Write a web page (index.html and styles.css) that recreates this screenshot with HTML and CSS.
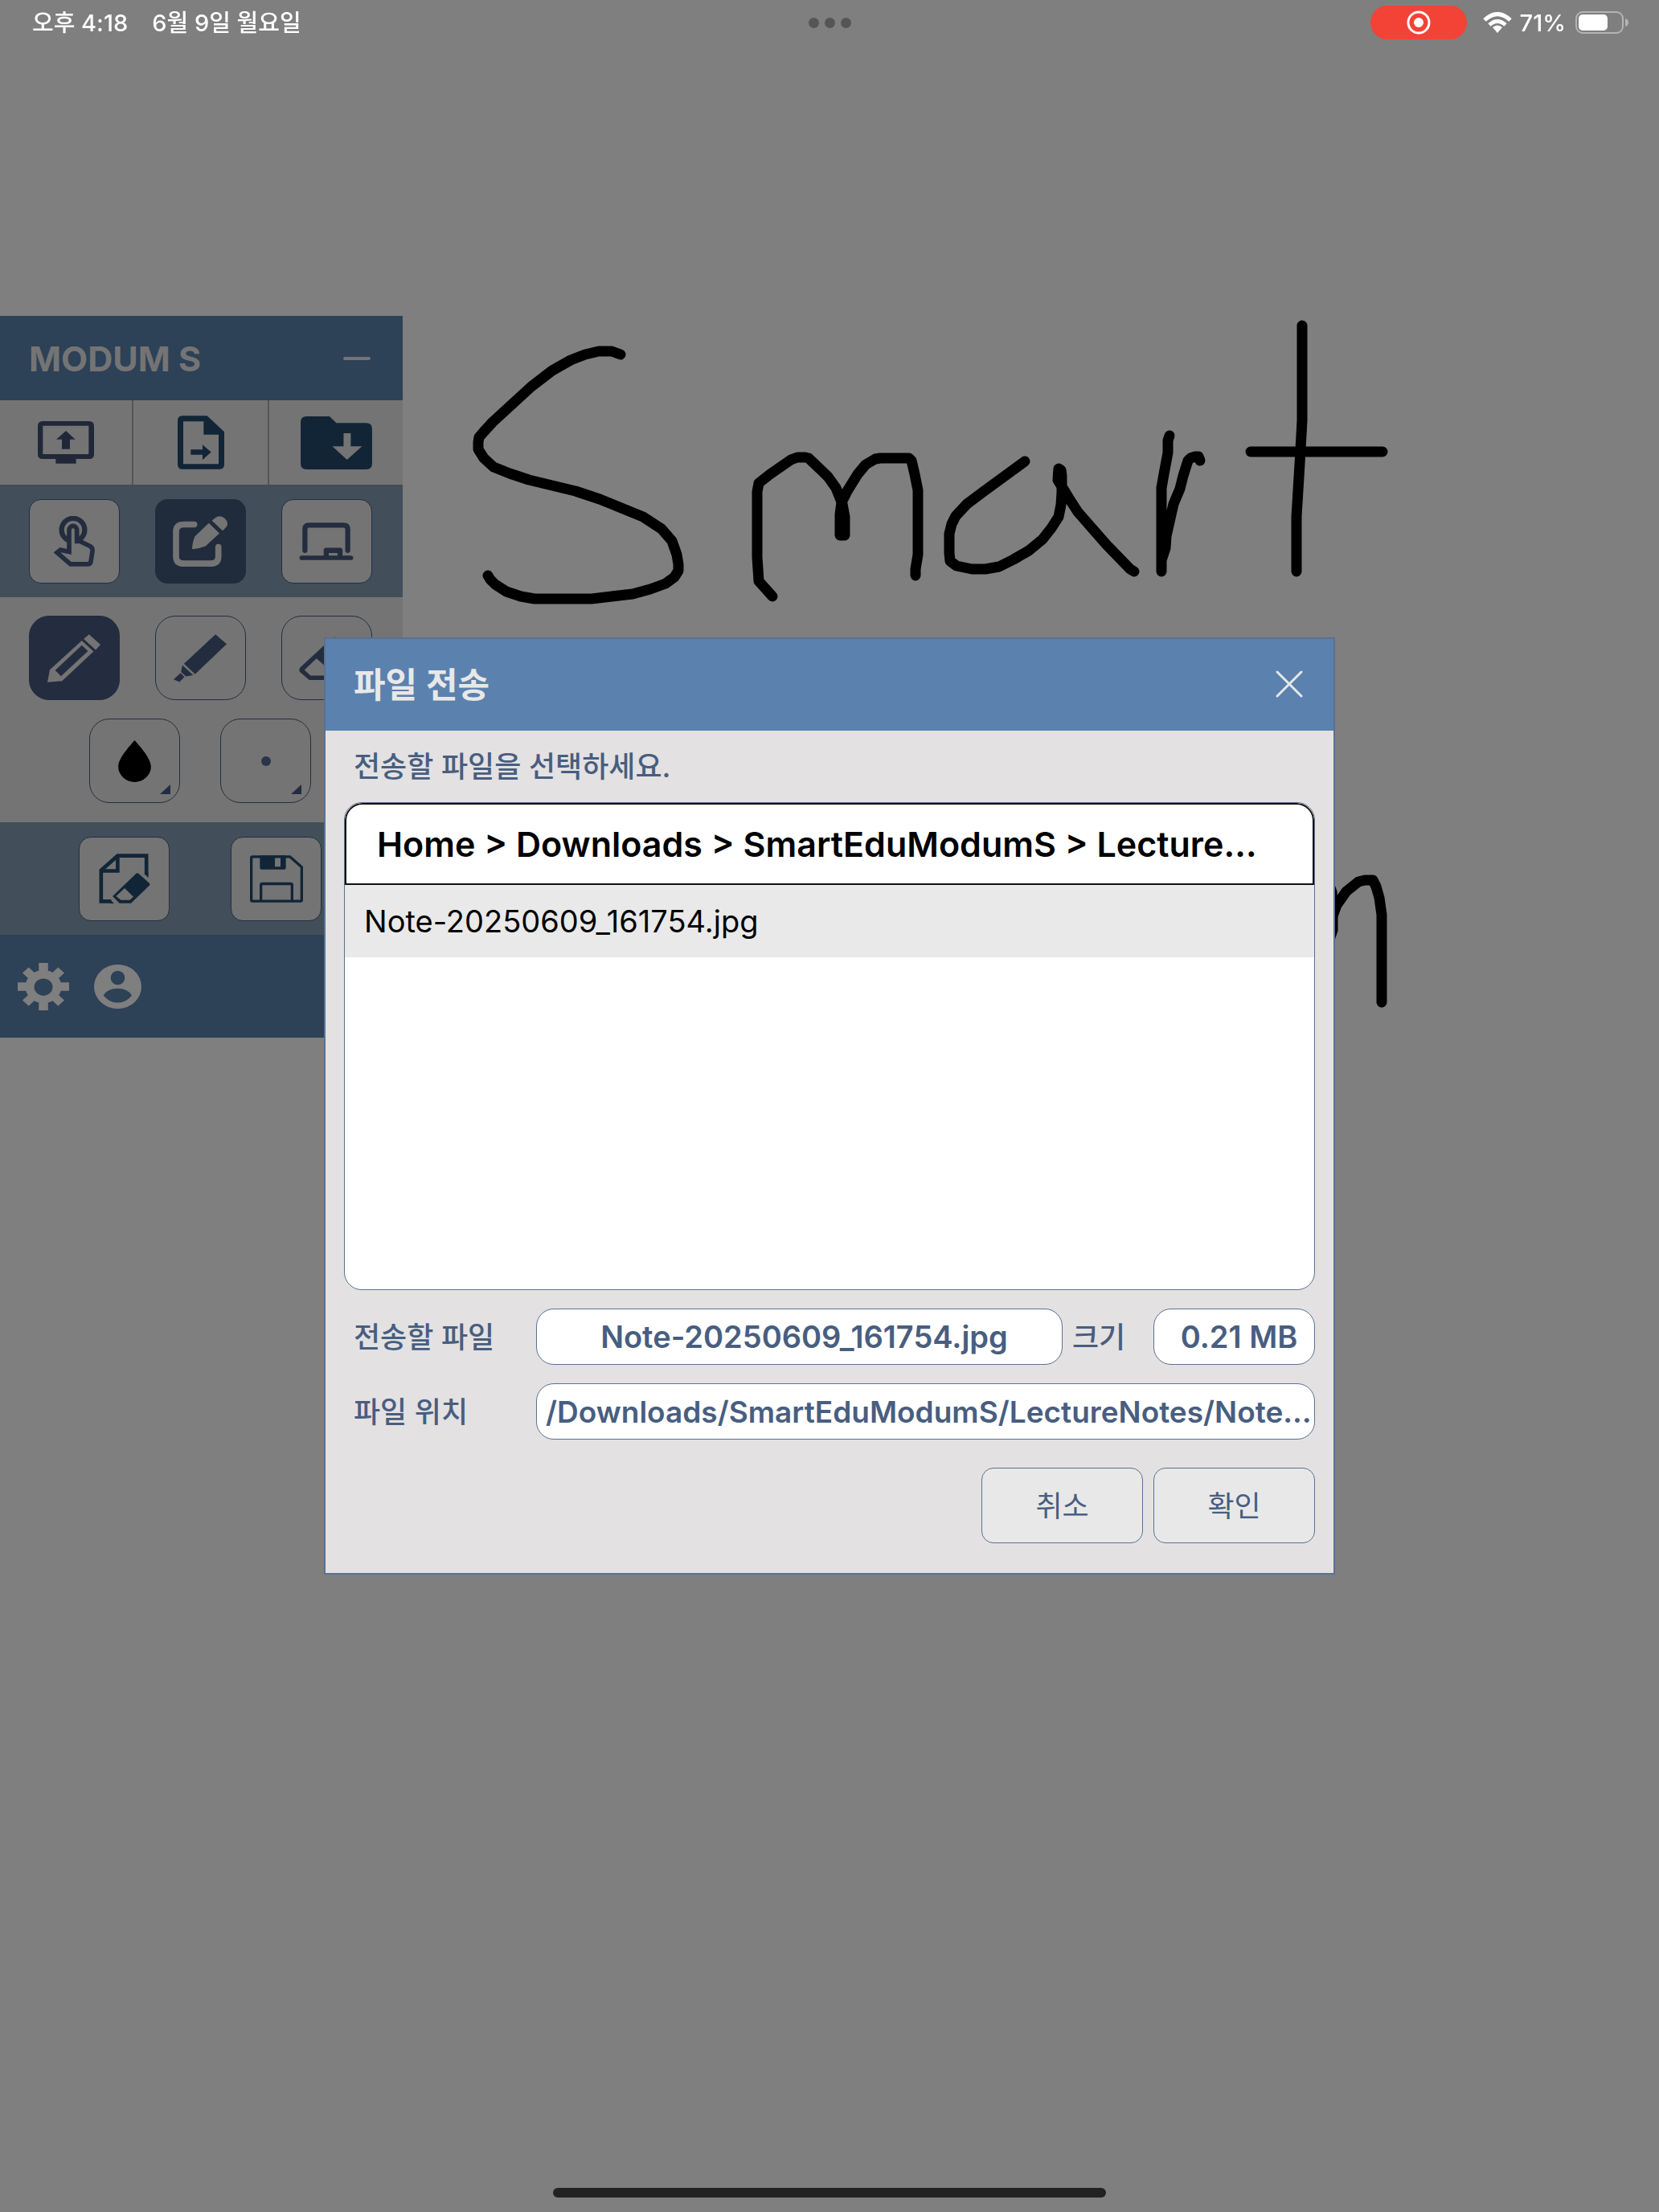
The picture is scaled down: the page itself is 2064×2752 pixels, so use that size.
FILE: index.html
```html
<!DOCTYPE html>
<html lang="ko">
<head>
    <meta charset="UTF-8">
    <meta name="viewport" content="width=device-width, initial-scale=1.0">
    <title>MODUM S</title>
    <link rel="stylesheet" href="styles.css">
</head>
<body>
    <!-- Pen strokes on the board -->
    <svg class="board" width="2064" height="2752" viewBox="0 0 2064 2752" aria-hidden="true">
        <polyline points="772,441 761,437 745,437 728,441 710,448 687,461 661,481 613,525 602,537 596,544 595,550 595,559 602,570 614,581 634,589 658,597 716,611 746,621 800,643 823,658 836,673 842,690 844,702 844,710 839,718 828,726 809,733 787,739 761,742 736,745 665,745 648,742 630,736 616,727 610,721 607,716"/>
        <polyline points="961,742 944,723 942,693 942,612 944,601 958,590 984,572 992,569 1002,569 1006,570 1030,593 1040,607 1048,627 1051,643 1051,666 1045,666 1045,640 1047,625 1054,611 1067,590 1077,578 1089,571 1095,570 1131,570 1134,573 1138,590 1142,610 1142,690 1139,708 1139,716"/>
        <polyline points="1275,574 1223,612 1203,627 1189,642 1184,652 1181,664 1181,688 1182,698 1190,704 1209,708 1226,708 1243,705 1261,696 1280,685 1297,671 1308,657 1317,643 1320,628 1321,613 1321,592 1320,585 1317,583 1316,597 1330,620 1341,637 1376,677 1406,708 1411,711"/>
        <polyline points="1455,542 1453,548 1453,563 1448,590 1445,607 1445,711 1445,697 1450,682 1451,667 1460,627 1468,608 1472,592 1478,573 1481,570 1487,568 1491,568 1493,573"/>
        <polyline points="1620,405 1620,523 1617,577 1613,643 1613,711"/>
        <polyline points="1556,562 1720,562"/>
        <polyline points="1652,1096 1657,1110 1658,1130 1658,1157 1652,1175"/>
        <polyline points="1652,1156 1663,1126 1675,1109 1690,1097 1698,1095 1708,1095 1712,1103 1716,1117 1719,1138 1719,1247"/>
    </svg>

    <!-- Floating toolbar -->
    <aside class="toolbar">
        <header class="toolbar-header">
            <h1>MODUM S</h1>
            <button class="plain" aria-label="최소화">
                <svg width="34" height="34" viewBox="0 0 34 34"><path d="M2 17H32" stroke="#e8e8e8" stroke-width="4" stroke-linecap="round"/></svg>
            </button>
        </header>

        <div class="tabs">
            <button class="tab tab-slate" aria-label="화면 공유">
                <svg width="70" height="53" viewBox="0 0 210 159"><path fill-rule="evenodd" d="M18 0H192Q210 0 210 18V123Q210 141 192 141H143V158H67V141H18Q0 141 0 123V18Q0 0 18 0ZM19 17V123H190V17Z"/><path d="M105 36L140 68H120V104H90V68H69Z"/></svg>
            </button>
            <button class="tab" aria-label="파일 전송">
                <svg width="58" height="67" viewBox="0 0 174 200"><path fill-rule="evenodd" d="M18 0H110L174 60V182Q174 200 156 200H18Q0 200 0 182V18Q0 0 18 0ZM21 21V180H153V71H97V21Z"/><path d="M49 126H93V108L125 136L93 165V146H49Z"/></svg>
            </button>
            <button class="tab" aria-label="받은 파일">
                <svg width="89" height="66" viewBox="0 0 268 199"><path fill-rule="evenodd" d="M22 0H108L134 25H246Q268 25 268 47V177Q268 199 246 199H22Q0 199 0 177V22Q0 0 22 0ZM161 63V112H119L174 163L230 112H188V63Z"/></svg>
            </button>
        </div>

        <div class="modes">
            <button class="tool" aria-label="터치">
                <svg width="51" height="63" viewBox="0 0 153 188"><circle cx="72" cy="51" r="43" fill="none" stroke="currentColor" stroke-width="19"/><path d="M57 133V52A14 15 0 0 1 86 52V94H98L135 112Q146 118 144 131L138 170Q136 179 126 179H62L12 136L25 126Z" fill="#e8e8e8" stroke="currentColor" stroke-width="17"/></svg>
            </button>
            <button class="tool active deep" aria-label="판서">
                <svg width="68" height="63" viewBox="0 0 204 188"><path d="M80 31H42Q12 31 12 58V150Q12 177 42 177H140Q170 177 170 150V115" fill="none" stroke="currentColor" stroke-width="23" stroke-linecap="round"/><path d="M134 26L174 64L122 112Q98 122 75 123Q71 123 72 118Q73 96 82 76ZM146 17L157 7Q176 -7 195 9Q212 28 198 42L186 54Z"/></svg>
            </button>
            <button class="tool" aria-label="칠판">
                <svg width="68" height="47" viewBox="0 0 203 142"><g fill="none" stroke="currentColor" stroke-width="19" stroke-linecap="round"><path d="M21 105V25Q21 10 36 10H166Q182 10 182 25V105"/><path d="M9 133H194" stroke-width="17"/><path d="M101 128V105H153V128" stroke-linejoin="round"/></g></svg>
            </button>
        </div>

        <div class="pens">
            <div class="pen-row">
                <button class="tool round active" aria-label="연필">
                    <svg width="66" height="60" viewBox="0 0 199 180"><path fill-rule="evenodd" d="M156 0L199 39L181 58L136 18ZM129 24L173 64L55 175L0 180L9 133ZM129 41L29 135L51 157L152 63Z"/></svg>
                </button>
                <button class="tool round" aria-label="형광펜">
                    <svg width="66" height="60" viewBox="0 0 200 181"><path d="M158 0L200 37L81 150L39 111ZM33 116L74 154L46 159L28 142ZM26 146L41 161L22 180L0 170Z"/></svg>
                </button>
                <button class="tool round" aria-label="지우개">
                    <svg width="68" height="54" viewBox="0 0 203 161"><path fill-rule="evenodd" d="M4 115L122 6Q132 -3 142 6L196 52Q206 62 196 72L110 161H38L4 132Q-2 124 4 115ZM65 81L20 124L43 145H100L120 130Z"/></svg>
                </button>
            </div>
            <div class="pen-row pen-options">
                <button class="tool round has-menu" aria-label="색상">
                    <svg width="41" height="52" viewBox="0 0 122 156"><path fill="#000" d="M61 0C82 24 122 68 122 98A61 58 0 0 1 0 98C0 68 40 24 61 0Z"/></svg>
                </button>
                <button class="tool round has-menu" aria-label="굵기"><span class="dot"></span></button>
            </div>
        </div>

        <div class="modes page-tools">
            <button class="tool navy" aria-label="모두 지우기">
                <svg width="64" height="62" viewBox="0 0 192 187"><g fill="none" stroke="currentColor" stroke-width="14"><path d="M178 80V8H70L8 63V179H46"/><path d="M70 8V65H8"/></g><path d="M171 75L185 91V70H171ZM40 172L57 187H40Z"/><path fill-rule="evenodd" d="M138 76Q144 70 150 76L188 110Q194 115 188 121L120 186H77L51 160ZM96 130L64 160L82 174H115L129 162Z"/></svg>
            </button>
            <button class="tool navy" aria-label="저장">
                <svg width="66" height="59" viewBox="0 0 198 176"><g fill="none" stroke="currentColor" stroke-width="10"><path d="M9 5H149L193 44V167Q193 171 189 171H9Q5 171 5 167V9Q5 5 9 5Z"/><path d="M41 171V110Q41 106 46 106H152Q157 106 157 110V171"/></g><path fill-rule="evenodd" d="M37 0H134V45Q134 53 126 53H45Q37 53 37 45ZM93 8V42H114V8Z"/></svg>
            </button>
        </div>

        <footer class="toolbar-footer">
            <button class="plain" aria-label="설정">
                <svg width="64" height="59" viewBox="0 0 200 200" preserveAspectRatio="none"><g fill="#fff"><circle cx="100" cy="100" r="70"/><path d="M82 0H118V200H82ZM0 82H200V118H0Z"/><path transform="rotate(45 100 100)" d="M83 2H117V198H83ZM2 83H198V117H2Z"/></g><circle cx="100" cy="102" r="36" fill="#5a82ae"/></svg>
            </button>
            <button class="plain" aria-label="사용자">
                <svg width="59" height="55" viewBox="0 0 177 164"><path fill="#fff" fill-rule="evenodd" d="M0 82A88 82 0 0 1 177 82A88 82 0 0 1 0 82ZM62 49A26 26 0 0 0 115 49A26 26 0 0 0 62 49ZM35 115Q56 142 88 142Q120 142 141 115Q126 89 88 89Q50 89 35 115Z"/></svg>
            </button>
        </footer>
    </aside>

    <!-- File transfer dialog -->
    <div class="overlay">
        <form class="dialog" role="dialog" aria-labelledby="dialog-title">
            <header class="dialog-header">
                <h2 id="dialog-title">파일 전송</h2>
                <button type="button" class="plain" aria-label="닫기">
                    <svg width="34" height="34" viewBox="0 0 34 34"><path d="M2 2L32 32M32 2L2 32" stroke="#e8e8e8" stroke-width="3" stroke-linecap="round"/></svg>
                </button>
            </header>
            <div class="dialog-body">
                <p class="prompt">전송할 파일을 선택하세요.</p>
                <div class="browser">
                    <div class="path">Home &gt; Downloads &gt; SmartEduModumS &gt; Lecture…</div>
                    <ul class="files">
                        <li>Note-20250609_161754.jpg</li>
                    </ul>
                </div>
                <div class="field">
                    <label for="file-name">전송할 파일</label>
                    <input class="grow centered" type="text" id="file-name" value="Note-20250609_161754.jpg" readonly>
                    <label class="size-label" for="file-size">크기</label>
                    <input class="centered" type="text" id="file-size" value="0.21 MB" readonly>
                </div>
                <div class="field">
                    <label for="file-path">파일 위치</label>
                    <input class="grow" type="text" id="file-path" value="/Downloads/SmartEduModumS/LectureNotes/Note…" readonly>
                </div>
                <div class="actions">
                    <button type="button">취소</button>
                    <button type="button">확인</button>
                </div>
            </div>
        </form>
    </div>

    <!-- System status bar -->
    <div class="status-bar">
        <div class="status-left"><span>오후 4:18</span><span>6월 9일 월요일</span></div>
        <div class="more"><i></i><i></i><i></i></div>
        <div class="status-right">
            <span class="recording">
                <svg width="30" height="30" viewBox="0 0 30 30"><circle cx="15" cy="15" r="13" fill="none" stroke="#fff" stroke-width="3"/><circle cx="15" cy="15" r="6" fill="#fff"/></svg>
            </span>
            <svg class="wifi" width="36" height="26" viewBox="0 0 36 26"><g fill="none" stroke="#fff" stroke-width="5"><path d="M2 10Q18 -5 34 10"/><path d="M8 16Q18 7 28 16"/></g><path fill="#fff" d="M12 19Q18 14 24 19L18 26Z"/></svg>
            <span>71%</span>
            <svg class="battery" width="66" height="28" viewBox="0 0 66 28"><rect x="1" y="1" width="58" height="26" rx="8" fill="none" stroke="#b4b4b4" stroke-width="2"/><rect x="4" y="4" width="36" height="20" rx="5" fill="#fff"/><path fill="#b4b4b4" d="M62 9Q66 10 66 14Q66 18 62 19Z"/></svg>
        </div>
    </div>
    <div class="home-bar"></div>
</body>
</html>
```
FILE: styles.css
```css
* {
    box-sizing: border-box;
}

body {
    margin: 0;
    min-height: 100vh;
    background-color: #fff;
    color: #485e80;
    font-family: Inter, "Noto Sans CJK KR", sans-serif;
    font-size: 36px;
    overflow: hidden;
}

h1, h2, p, ul {
    margin: 0;
    padding: 0;
}

button, input {
    font: inherit;
    color: inherit;
}

svg {
    display: block;
    fill: currentColor;
}

.plain {
    padding: 0;
    border: none;
    background: none;
    cursor: pointer;
}

/* Board */
.board {
    position: absolute;
    top: 0;
    left: 0;
    fill: none;
    stroke: #000;
    stroke-width: 13px;
    stroke-linecap: round;
    stroke-linejoin: round;
}

/* Toolbar */
.toolbar {
    position: absolute;
    top: 393px;
    left: 0;
    width: 501px;
    background-color: #e8e8e8;
}

.toolbar-header {
    display: flex;
    justify-content: space-between;
    align-items: center;
    height: 105px;
    padding: 0 40px 0 36px;
    background-color: #5a82ae;
}

.toolbar-header h1 {
    font-size: 43px;
    font-weight: 700;
    color: #e8e8e8;
}

.tabs {
    display: grid;
    grid-template-columns: 166px 1fr 166px;
    height: 105px;
}

.tab {
    display: flex;
    justify-content: center;
    align-items: center;
    padding: 0;
    border: none;
    border-right: 2px solid #aaa;
    background: none;
    color: #224a6c;
}

.tab-slate {
    color: #405070;
}

.tab:last-child {
    border-right: none;
}

.modes {
    display: flex;
    justify-content: center;
    align-items: center;
    gap: 44px;
    height: 140px;
    padding-right: 3px;
    background-color: #849eb4;
}

.page-tools {
    gap: 76px;
}

.tool {
    position: relative;
    display: flex;
    justify-content: center;
    align-items: center;
    width: 113px;
    height: 105px;
    padding: 0;
    border: 1px solid #485a7e;
    border-radius: 15px;
    background-color: #e8e8e8;
    color: #485a7e;
}

.tool.round {
    border-radius: 25px;
}

.tool.navy {
    color: #224a6c;
}

.tool.active {
    background-color: #485a7e;
    color: #e8e8e8;
}

.tool.deep {
    border-color: #405678;
    background-color: #405678;
}

.pens {
    display: flex;
    flex-direction: column;
    gap: 23px;
    padding: 23px 3px 24px 0;
}

.pen-row {
    display: flex;
    justify-content: center;
    gap: 44px;
}

.pen-options {
    gap: 50px;
}

.has-menu::after {
    content: "";
    position: absolute;
    right: 11px;
    bottom: 10px;
    border-left: 13px solid transparent;
    border-bottom: 12px solid #485a7e;
}

.dot {
    width: 12px;
    height: 12px;
    border-radius: 50%;
    background-color: #546c8e;
}

.toolbar-footer {
    display: flex;
    align-items: center;
    gap: 31px;
    height: 128px;
    padding-left: 22px;
    background-color: #5a82ae;
}

/* Dialog */
.overlay {
    position: fixed;
    inset: 0;
    display: flex;
    justify-content: center;
    align-items: center;
    background-color: rgba(0, 0, 0, 0.5);
}

.dialog {
    width: 1258px;
    max-width: 100%;
    border: 2px solid #5a7192;
    background-color: #e3e1e2;
}

.dialog-header {
    display: flex;
    justify-content: space-between;
    align-items: center;
    height: 114px;
    padding: 0 38px 2px 35px;
    background-color: #5b81ae;
}

.dialog-header h2 {
    padding-bottom: 4px;
    font-size: 43px;
    font-weight: 600;
    color: #e8e8e8;
}

.dialog-body {
    padding: 0 23px 37px;
}

.prompt {
    padding: 2px 0 0 12px;
    font-weight: 500;
    line-height: 87px;
}

.browser {
    height: 607px;
    border: 1px solid #5a7192;
    border-radius: 22px;
    background-color: #fff;
    color: #000;
    overflow: hidden;
}

.path {
    height: 102px;
    padding: 0 38px;
    border: 2px solid #111;
    border-radius: 22px 22px 0 0;
    font-size: 43px;
    font-weight: 600;
    line-height: 98px;
    white-space: nowrap;
}

.files {
    list-style: none;
}

.files li {
    padding: 0 24px;
    background-color: #e9e9e9;
    font-size: 38px;
    line-height: 90px;
}

.field {
    display: flex;
    align-items: center;
    margin-top: 23px;
}

.field label {
    width: 239px;
    padding: 0 0 4px 12px;
    font-weight: 500;
}

.field .size-label {
    width: 113px;
}

.field input {
    width: 201px;
    min-width: 0;
    height: 70px;
    padding: 0 4px 0 11px;
    border: 1px solid #5a7192;
    border-radius: 22px;
    background-color: #fff;
    font-size: 37px;
    font-weight: 600;
}

.field input.grow {
    flex: 1;
}

.field input.centered {
    padding: 0 0 0 12px;
    font-size: 38px;
    text-align: center;
}

.actions {
    display: flex;
    justify-content: flex-end;
    gap: 13px;
    margin-top: 35px;
}

.actions button {
    width: 201px;
    height: 94px;
    padding: 0 0 4px;
    border: 1px solid #5a7192;
    border-radius: 15px;
    background-color: #e8e8e8;
    cursor: pointer;
}

/* Status bar */
.status-bar {
    position: fixed;
    top: 0;
    left: 0;
    right: 0;
    display: grid;
    grid-template-columns: 1fr auto 1fr;
    align-items: center;
    height: 56px;
    padding: 0 38px;
    color: #fff;
    font-size: 29px;
    font-weight: 500;
}

.status-left {
    display: flex;
    gap: 30px;
    padding: 0 0 4px 2px;
}

.more {
    display: flex;
    gap: 7px;
}

.more i {
    width: 13px;
    height: 13px;
    border-radius: 50%;
    background-color: #555;
}

.status-right {
    display: flex;
    justify-content: flex-end;
    align-items: center;
}

.recording {
    display: flex;
    justify-content: center;
    align-items: center;
    width: 120px;
    height: 42px;
    border-radius: 21px;
    background-color: #f24336;
}

.wifi {
    margin: 0 10px 0 20px;
}

.battery {
    margin-left: 12px;
}

.home-bar {
    position: fixed;
    bottom: 18px;
    left: 50%;
    width: 688px;
    height: 12px;
    border-radius: 6px;
    background-color: #222;
    transform: translateX(-50%);
}
```
